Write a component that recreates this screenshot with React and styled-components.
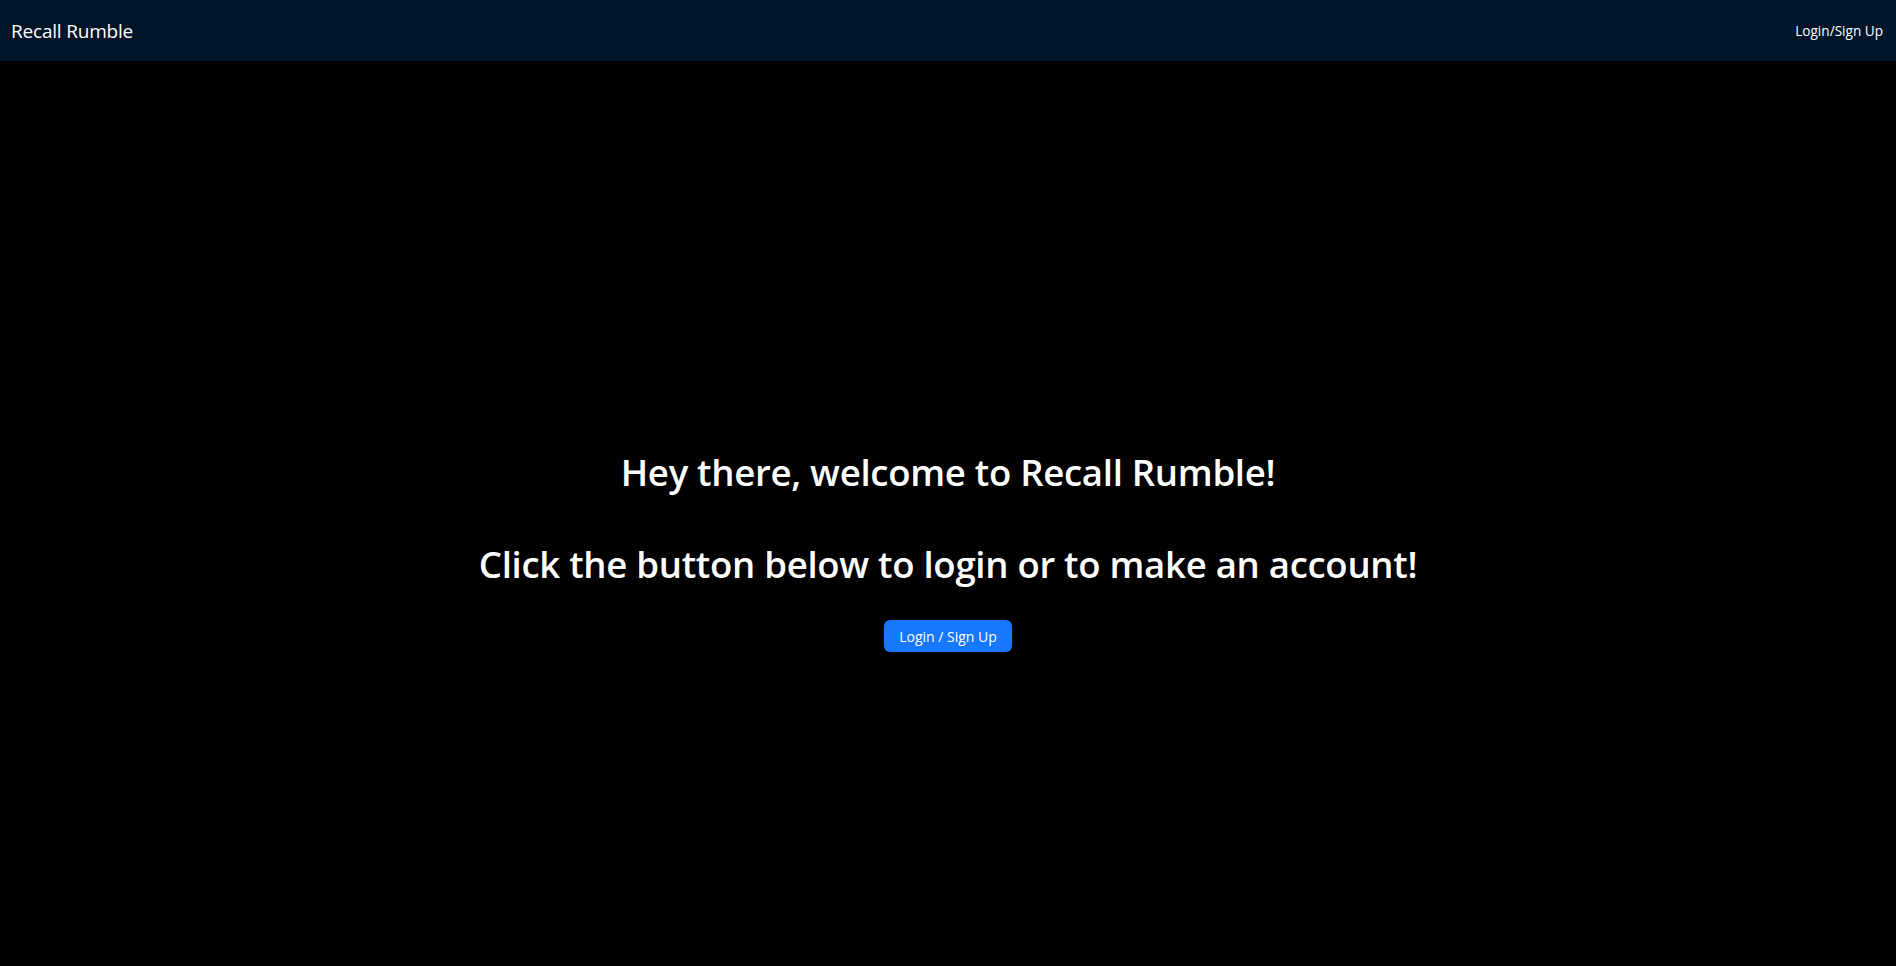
import React from "react";
import styled, { createGlobalStyle } from "styled-components";

const Global = createGlobalStyle`
  html, body { margin: 0; padding: 0; background: #000; }
  body { font-family: "Open Sans", "Noto Sans", sans-serif; color: #fff; }
  * { box-sizing: border-box; }
`;

const Page = styled.div`
  min-height: 966px;
  display: flex;
  flex-direction: column;
  background: #000;
`;

const NavBar = styled.header`
  height: 61px;
  background: #001529;
  display: flex;
  align-items: center;
  justify-content: space-between;
  padding: 0 13px 0 11px;
`;

const Brand = styled.div`
  font-size: 19px;
  color: #fff;
  letter-spacing: -0.2px;
`;

const NavLink = styled.a`
  font-size: 13.6px;
  color: #fff;
  text-decoration: none;
  cursor: pointer;
`;

const Main = styled.main`
  flex: 1;
  display: flex;
  flex-direction: column;
  align-items: center;
  padding-top: 387px;
`;

const Heading = styled.h1`
  margin: 0;
  font-size: 36.6px;
  font-weight: 600;
  line-height: 48px;
  letter-spacing: -0.3px;
  color: #fff;
  text-align: center;
  & + & {
    margin-top: 44px;
  }
`;

const PrimaryButton = styled.button`
  margin-top: 32px;
  height: 32px;
  padding: 0 15px;
  border: none;
  border-radius: 6px;
  background: #1677ff;
  color: #fff;
  font-family: inherit;
  font-size: 14px;
  cursor: pointer;
`;

export default function App() {
  return (
    <>
      <Global />
      <Page>
        <NavBar>
          <Brand>Recall Rumble</Brand>
          <NavLink>Login/Sign Up</NavLink>
        </NavBar>
        <Main>
          <Heading>Hey there, welcome to Recall Rumble!</Heading>
          <Heading>Click the button below to login or to make an account!</Heading>
          <PrimaryButton>Login / Sign Up</PrimaryButton>
        </Main>
      </Page>
    </>
  );
}
